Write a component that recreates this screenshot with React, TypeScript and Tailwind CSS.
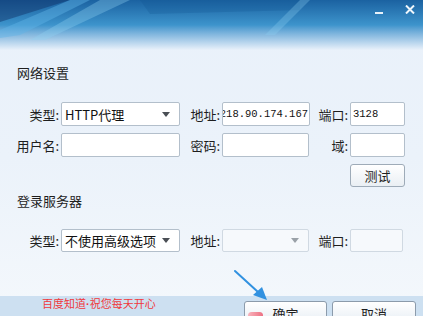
import React from "react";

const cjk = "font-['Noto_Sans_CJK_SC','Noto_Sans',sans-serif]";

function Label({ w, children }: { w: string; children: React.ReactNode }) {
  return (
    <div className={`${w} shrink-0 text-right text-[13px] leading-none text-[#1e1e1e] pr-[2px]`}>
      {children}
    </div>
  );
}

function Arrow({ disabled }: { disabled?: boolean }) {
  return (
    <svg width="8" height="5" viewBox="0 0 8 5" className="shrink-0">
      <polygon points="0,0 8,0 4,5" fill={disabled ? "#9aa1a8" : "#4a4f55"} />
    </svg>
  );
}

export default function App() {
  return (
    <div
      className={`relative w-[423px] h-[316px] overflow-hidden flex flex-col bg-gradient-to-b from-[#e9f1fa] via-[#ebf2fa] to-[#f4f8fc] ${cjk}`}
    >
      {/* title bar */}
      <div className="relative h-[50px] shrink-0 bg-gradient-to-b from-[#1b62a1] via-[#3d94cc] to-[#e9f1fa]">
        <svg className="absolute inset-0" width="423" height="50" viewBox="0 0 423 50">
          <polygon points="0,0 70,0 0,22" fill="#0f2f63" opacity="0.45" />
          <polygon points="70,0 90,0 20,35 0,38 0,30" fill="#5fb4e6" opacity="0.45" />
          <polygon points="100,0 130,0 45,40 30,40" fill="#8fd0f2" opacity="0.35" />
          <polygon points="140,0 300,0 300,10 150,14" fill="#10548f" opacity="0.25" />
          <polygon points="300,0 310,0 275,35 265,35" fill="#8fd0f2" opacity="0.3" />
        </svg>
        <div className="absolute right-[40px] top-[12px] w-[8px] h-[2px] bg-[#e8f2fa]" />
        <svg className="absolute left-[405px] top-[5px]" width="10" height="9" viewBox="0 0 10 9">
          <path d="M1 0.5 L9 8.5 M9 0.5 L1 8.5" stroke="#eef6fc" strokeWidth="2" />
        </svg>
      </div>

      {/* network settings */}
      <div className="pl-[17px] mt-[16px] text-[13px] leading-[14px] text-[#1e1e1e]">网络设置</div>

      <div className="mt-[22px] flex items-center h-[24px]">
        <Label w="w-[61px]">类型:</Label>
        <div className="w-[119px] h-[24px] bg-white border border-[#b3bfcb] rounded-[2px] flex items-center pl-[3px] pr-[9px]">
          <span className="flex-1 text-[13px] leading-none text-[#111]">HTTP代理</span>
          <Arrow />
        </div>
        <Label w="w-[42px]">地址:</Label>
        <div className="w-[88px] h-[24px] bg-white border border-[#b3bfcb] rounded-[2px] flex items-center justify-end overflow-hidden pr-[1px]">
          <span className="font-['Liberation_Mono',monospace] text-[10.5px] leading-none text-[#111] whitespace-nowrap">
            218.90.174.167
          </span>
        </div>
        <Label w="w-[40px]">端口:</Label>
        <div className="w-[55px] h-[24px] bg-white border border-[#b3bfcb] rounded-[2px] flex items-center pl-[2px]">
          <span className="font-['Liberation_Mono',monospace] text-[10.5px] leading-none text-[#111]">3128</span>
        </div>
      </div>

      <div className="mt-[7px] flex items-center h-[24px]">
        <Label w="w-[61px]">用户名:</Label>
        <div className="w-[119px] h-[24px] bg-white border border-[#b3bfcb] rounded-[2px]" />
        <Label w="w-[42px]">密码:</Label>
        <div className="w-[87px] h-[24px] bg-white border border-[#b3bfcb] rounded-[2px]" />
        <Label w="w-[41px]">域:</Label>
        <div className="w-[55px] h-[24px] bg-white border border-[#b3bfcb] rounded-[2px]" />
      </div>

      <div className="mt-[7px] pl-[350px]">
        <div className="w-[55px] h-[23px] border border-[#9eabb8] rounded-[3px] bg-gradient-to-b from-white to-[#eaeff4] flex items-center justify-center text-[13px] leading-none text-[#1e1e1e]">
          测试
        </div>
      </div>

      {/* login server */}
      <div className="pl-[17px] mt-[7px] text-[13px] leading-[14px] text-[#1e1e1e]">登录服务器</div>

      <div className="mt-[21px] flex items-center h-[23px]">
        <Label w="w-[61px]">类型:</Label>
        <div className="w-[119px] h-[23px] bg-white border border-[#b3bfcb] rounded-[2px] flex items-center pl-[3px] pr-[9px]">
          <span className="flex-1 text-[13px] leading-none text-[#111]">不使用高级选项</span>
          <Arrow />
        </div>
        <Label w="w-[42px]">地址:</Label>
        <div className="w-[87px] h-[23px] bg-[#f6f9fc] border border-[#d0d9e2] rounded-[2px] flex items-center justify-end pr-[9px]">
          <Arrow disabled />
        </div>
        <Label w="w-[41px]">端口:</Label>
        <div className="w-[53px] h-[23px] bg-[#f6f9fc] border border-[#d0d9e2] rounded-[2px]" />
      </div>

      {/* footer */}
      <div className="mt-auto h-[20px] shrink-0 bg-[#cde0f1] flex items-start">
        <div className="pl-[42px] pt-[1px] text-[11px] leading-[13px] text-[#f0383c] w-[244px] whitespace-nowrap">
          百度知道<span className="font-['Liberation_Sans',sans-serif] font-bold">·</span>祝您每天开心
        </div>
        <div className="relative mt-[5px] w-[83px] h-[24px] border border-[#8c9bab] rounded-[3px] bg-gradient-to-b from-white to-[#e6edf4] flex justify-center pt-[5px] text-[13px] leading-none text-[#1e1e1e]">
          确定
          <div className="absolute left-[3px] top-[10px] w-[15px] h-[7px] rounded-full bg-gradient-to-r from-[#f7b3bd] to-[#ec6f82]" />
        </div>
        <div className="ml-[5px] mt-[5px] w-[84px] h-[24px] border border-[#8c9bab] rounded-[3px] bg-gradient-to-b from-white to-[#e6edf4] flex justify-center pt-[5px] text-[13px] leading-none text-[#1e1e1e]">
          取消
        </div>
      </div>

      {/* annotation arrow */}
      <svg className="absolute left-[232px] top-[268px]" width="40" height="36" viewBox="0 0 40 36">
        <path d="M3 3 L26 24" stroke="#3191e0" strokeWidth="2" strokeLinecap="round" />
        <polygon points="21,27 30,19 35,32" fill="#3191e0" />
      </svg>
    </div>
  );
}
